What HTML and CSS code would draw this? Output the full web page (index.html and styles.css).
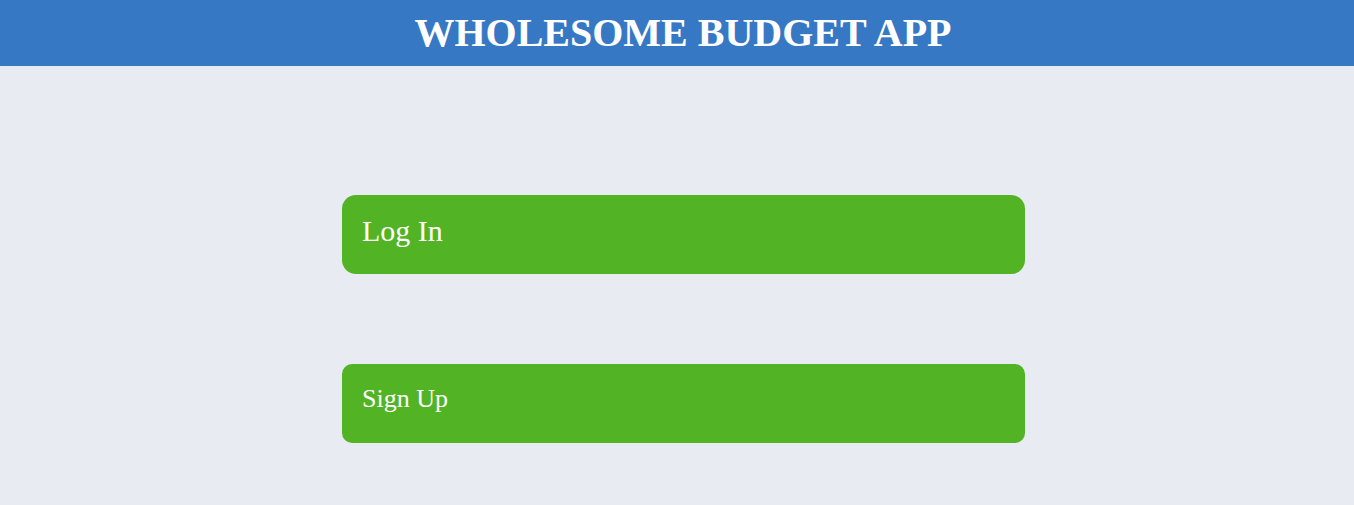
FILE: index.html
```html
<!DOCTYPE html>
<html>
<head>
<meta charset="utf-8">
<link rel="stylesheet" href="styles.css">
</head>
<body>
<header class="top-bar">
  <h1 class="title">WHOLESOME BUDGET APP</h1>
</header>
<main class="actions">
  <a class="action action-login" href="#">Log In</a>
  <a class="action action-signup" href="#">Sign Up</a>
</main>
</body>
</html>
```
FILE: styles.css
```css
html, body {
  margin: 0;
  padding: 0;
}
body {
  background: #e8ebf2;
  font-family: "Liberation Serif", "Times New Roman", serif;
  min-height: 505px;
}
.top-bar {
  background: #3678c4;
  height: 66px;
  display: flex;
  align-items: center;
  justify-content: center;
  padding-left: 12px;
}
.title {
  margin: 0;
  color: #fff;
  font-size: 40px;
  font-weight: bold;
  line-height: 1;
}
.actions {
  display: flex;
  flex-direction: column;
  align-items: flex-start;
  padding-top: 129px;
  padding-left: 342px;
  gap: 90px;
}
.action {
  box-sizing: border-box;
  width: 683px;
  height: 79px;
  background: #52b424;
  color: #fff;
  text-decoration: none;
  display: flex;
  align-items: center;
  padding-left: 20px;
}
.action-login {
  font-size: 30px;
  border-radius: 14px;
  padding-bottom: 7px;
}
.action-signup {
  font-size: 26px;
  border-radius: 10px;
  padding-bottom: 9px;
}
```
